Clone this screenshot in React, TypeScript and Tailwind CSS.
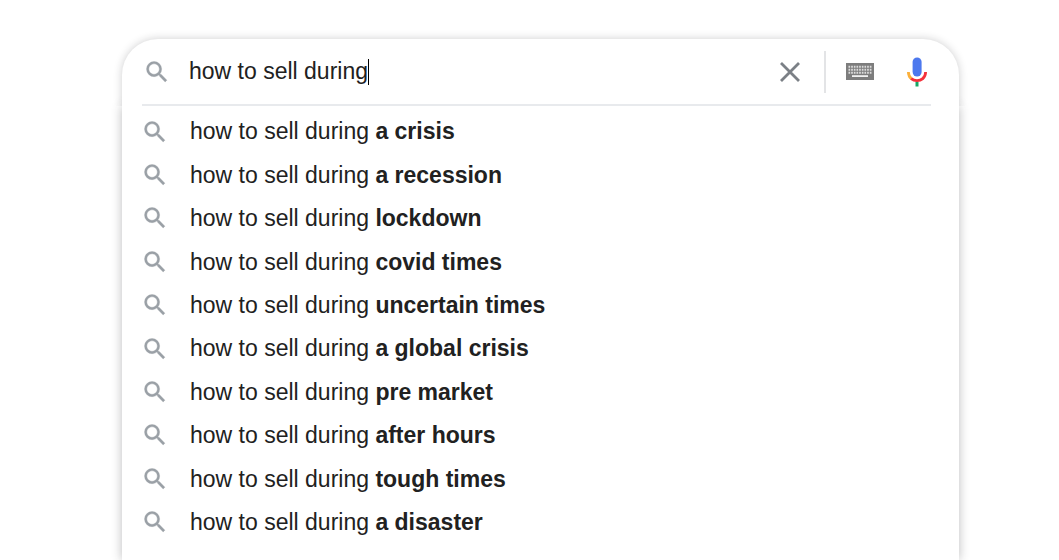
import { useState } from 'react';

const PREFIX = 'how to sell during';

const SUGGESTIONS = [
  'a crisis',
  'a recession',
  'lockdown',
  'covid times',
  'uncertain times',
  'a global crisis',
  'pre market',
  'after hours',
  'tough times',
  'a disaster',
];

const SearchIcon = () => (
  <svg
    viewBox="0 0 24 24"
    className="size-7 shrink-0"
    fill="#9aa0a6"
    stroke="#9aa0a6"
    strokeWidth="0.3"
    aria-hidden="true"
  >
    <path d="M15.5 14h-.79l-.28-.27A6.471 6.471 0 0 0 16 9.5 6.5 6.5 0 1 0 9.5 16c1.61 0 3.09-.59 4.23-1.57l.27.28v.79l5 4.99L20.49 19l-4.99-5zm-6 0C7.01 14 5 11.99 5 9.5S7.01 5 9.5 5 14 7.01 14 9.5 11.99 14 9.5 14z" />
  </svg>
);

const ClearIcon = () => (
  <svg viewBox="0 0 20 20" className="size-5" stroke="#7b8086" strokeWidth="2.8" aria-hidden="true">
    <path d="M1 1l18 18M19 1L1 19" />
  </svg>
);

const KeyboardIcon = () => (
  <svg viewBox="0 0 28 17" className="h-[17px] w-7" aria-hidden="true">
    <rect width="28" height="17" fill="#7d7d7d" />
    {[3, 6, 9].map((y) => (
      <path
        key={y}
        d={`M2.5 ${y + 0.7}H25.5`}
        stroke="#dcdcdc"
        strokeWidth="1.9"
        strokeDasharray="1.7 0.96"
      />
    ))}
    <path d="M6 13.1H22" stroke="#f1f1f1" strokeWidth="1.8" />
  </svg>
);

const MicIcon = () => (
  <svg viewBox="0 0 20 30" className="h-[30px] w-5" fill="none" aria-hidden="true">
    <rect x="5.6" y="0.5" width="9" height="19" rx="4.5" fill="#4c78ee" />
    <path d="M10 24.5V29.5" stroke="#17a765" strokeWidth="3" />
    <path d="M1.4 15C1.4 18 2.6 20.4 4.6 22" stroke="#fbb03b" strokeWidth="2.8" />
    <path d="M4.2 21.6C7.4 24.4 12.6 24.4 15.8 21.6C17.6 20 18.6 17.8 18.6 15" stroke="#f4303a" strokeWidth="2.8" />
  </svg>
);

export default function App() {
  const [query, setQuery] = useState(PREFIX);

  return (
    <main className="flex h-screen flex-col overflow-hidden bg-white pt-[39px] pr-[100px] pl-[122px] font-['Liberation_Sans',Arial,sans-serif] text-[23px] text-[#212121]">
      <form
        role="search"
        onSubmit={(e) => e.preventDefault()}
        className="relative z-10 rounded-t-[36px] bg-white shadow-[0_0_9px_rgba(32,33,36,0.22)] [clip-path:inset(-12px_-12px_0_-12px)]"
      >
        <div className="flex h-[65px] items-center pr-8 pl-[21px]">
          <label htmlFor="query" aria-label="Search">
            <SearchIcon />
          </label>
          <div className="ml-[18px] flex min-w-0 flex-1 items-center">
            <input
              id="query"
              type="text"
              autoComplete="off"
              aria-label="Search"
              className="field-sizing-content max-w-full bg-transparent caret-transparent outline-none"
              value={query}
              onChange={(e) => setQuery(e.target.value)}
            />
            <span className="h-[26px] w-px shrink-0 bg-black" />
          </div>
          <button type="button" aria-label="Clear" onClick={() => setQuery('')}>
            <ClearIcon />
          </button>
          <div className="ml-6 h-[42px] w-0.5 bg-[#e3e4e6]" />
          <button type="button" aria-label="On-screen keyboard" className="ml-5">
            <KeyboardIcon />
          </button>
          <button type="button" aria-label="Search by voice" className="ml-[33px]">
            <MicIcon />
          </button>
        </div>
        <div className="mr-7 ml-5 h-0.5 bg-[#e8eaed]" />
      </form>

      <div className="flex-1 bg-white pt-1 shadow-[0_0_10px_rgba(32,33,36,0.3)]">
        <ul className="grid h-[434px] auto-rows-fr">
          {SUGGESTIONS.map((s) => (
            <li key={s} className="flex">
              <button
                type="button"
                onClick={() => setQuery(`${PREFIX} ${s}`)}
                className="flex w-full items-center gap-[21px] pl-[19px] text-left"
              >
                <SearchIcon />
                <span>
                  {PREFIX} <b>{s}</b>
                </span>
              </button>
            </li>
          ))}
        </ul>
      </div>
    </main>
  );
}
